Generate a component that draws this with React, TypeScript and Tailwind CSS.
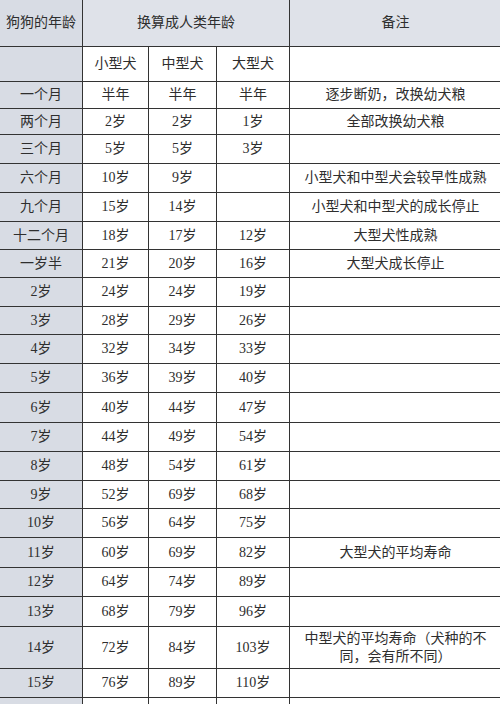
import React from "react";

type Row = { age: string; s: string; m: string; l: string; note: string; h: number };

const rows: Row[] = [
  { age: "一个月", s: "半年", m: "半年", l: "半年", note: "逐步断奶，改换幼犬粮", h: 27 },
  { age: "两个月", s: "2岁", m: "2岁", l: "1岁", note: "全部改换幼犬粮", h: 26 },
  { age: "三个月", s: "5岁", m: "5岁", l: "3岁", note: "", h: 29 },
  { age: "六个月", s: "10岁", m: "9岁", l: "", note: "小型犬和中型犬会较早性成熟", h: 29 },
  { age: "九个月", s: "15岁", m: "14岁", l: "", note: "小型犬和中型犬的成长停止", h: 29 },
  { age: "十二个月", s: "18岁", m: "17岁", l: "12岁", note: "大型犬性成熟", h: 28 },
  { age: "一岁半", s: "21岁", m: "20岁", l: "16岁", note: "大型犬成长停止", h: 28 },
  { age: "2岁", s: "24岁", m: "24岁", l: "19岁", note: "", h: 29 },
  { age: "3岁", s: "28岁", m: "29岁", l: "26岁", note: "", h: 28 },
  { age: "4岁", s: "32岁", m: "34岁", l: "33岁", note: "", h: 29 },
  { age: "5岁", s: "36岁", m: "39岁", l: "40岁", note: "", h: 29 },
  { age: "6岁", s: "40岁", m: "44岁", l: "47岁", note: "", h: 30 },
  { age: "7岁", s: "44岁", m: "49岁", l: "54岁", note: "", h: 29 },
  { age: "8岁", s: "48岁", m: "54岁", l: "61岁", note: "", h: 29 },
  { age: "9岁", s: "52岁", m: "69岁", l: "68岁", note: "", h: 28 },
  { age: "10岁", s: "56岁", m: "64岁", l: "75岁", note: "", h: 29 },
  { age: "11岁", s: "60岁", m: "69岁", l: "82岁", note: "大型犬的平均寿命", h: 30 },
  { age: "12岁", s: "64岁", m: "74岁", l: "89岁", note: "", h: 29 },
  { age: "13岁", s: "68岁", m: "79岁", l: "96岁", note: "", h: 30 },
  { age: "14岁", s: "72岁", m: "84岁", l: "103岁", note: "中型犬的平均寿命（犬种的不同，会有所不同）", h: 42 },
  { age: "15岁", s: "76岁", m: "89岁", l: "110岁", note: "", h: 29 },
  { age: "", s: "", m: "", l: "", note: "", h: 29 },
];

const cell = "border border-[#333] text-center align-middle p-0";
const gray = "bg-[#d8dce4]";

export default function App() {
  return (
    <div
      className="w-[500px] h-[704px] overflow-hidden bg-white text-[14px] leading-[18px] text-[#2e2e2e]"
      style={{ fontFamily: '"Liberation Serif", "Noto Sans CJK SC", serif' }}
    >
      <table className="border-collapse table-fixed w-[502px] -ml-px -mt-px">
        <colgroup>
          <col className="w-[83px]" />
          <col className="w-[66px]" />
          <col className="w-[68px]" />
          <col className="w-[73px]" />
          <col className="w-[212px]" />
        </colgroup>
        <tbody>
          <tr className="h-[47px]">
            <td className={`${cell} ${gray}`}>狗狗的年龄</td>
            <td className={`${cell} bg-[#dfe2e9]`} colSpan={3}>换算成人类年龄</td>
            <td className={`${cell} bg-[#dfe2e9]`}>备注</td>
          </tr>
          <tr className="h-[35px]">
            <td className={`${cell} ${gray}`}></td>
            <td className={cell}>小型犬</td>
            <td className={cell}>中型犬</td>
            <td className={cell}>大型犬</td>
            <td className={cell}></td>
          </tr>
          {rows.map((r, i) => (
            <tr key={i} style={{ height: r.h }}>
              <td className={`${cell} ${gray}`}>{r.age}</td>
              <td className={cell}>{r.s}</td>
              <td className={cell}>{r.m}</td>
              <td className={cell}>{r.l}</td>
              <td className={`${cell} px-[14px]`}>{r.note}</td>
            </tr>
          ))}
        </tbody>
      </table>
    </div>
  );
}
